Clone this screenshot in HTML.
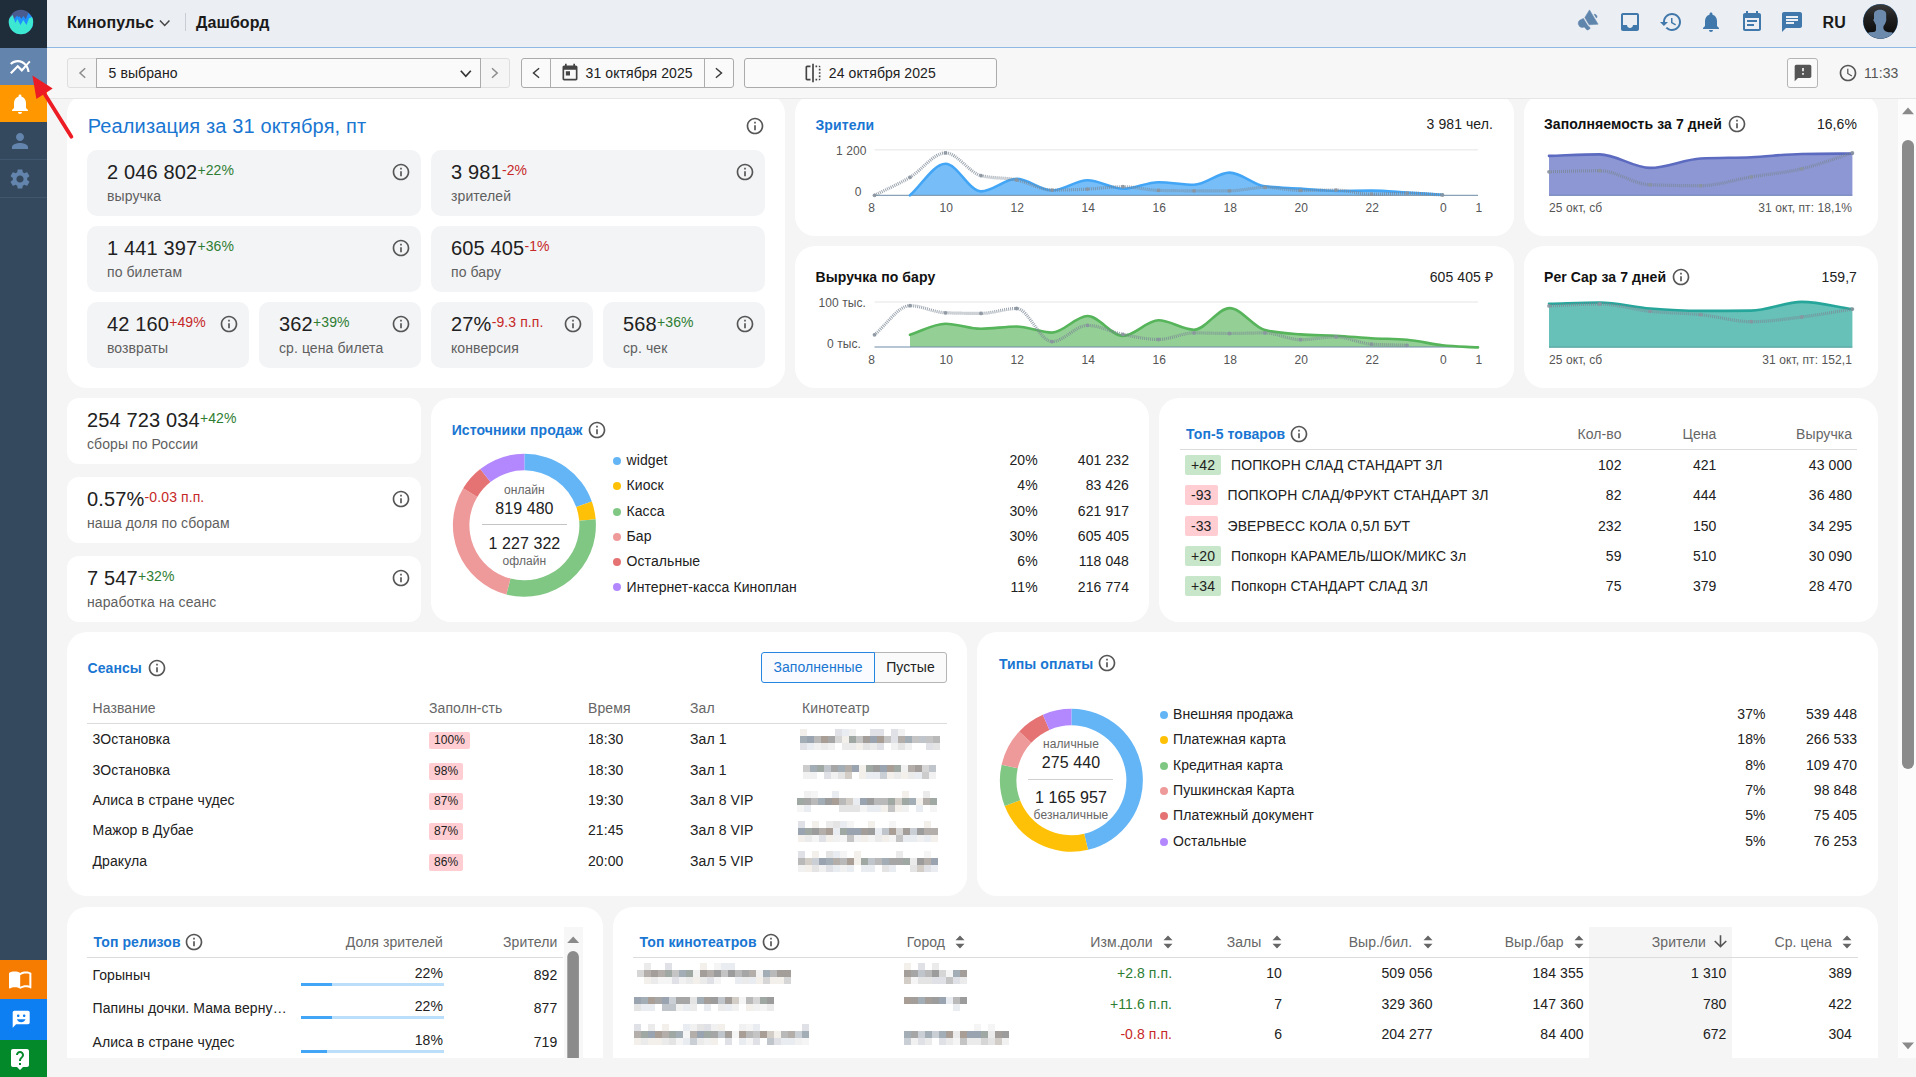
<!DOCTYPE html><html lang="ru"><head><meta charset="utf-8"><title>Дашборд</title><style>

*{box-sizing:border-box;margin:0;padding:0}
html,body{width:1916px;height:1077px;overflow:hidden;background:#f5f5f5;font-family:"Liberation Sans", Arial, sans-serif;color:#212121;letter-spacing:.085px}
.t{position:absolute;white-space:nowrap}
.i{position:absolute;display:block}
.b{position:absolute}
.card{position:absolute;background:#fff;border-radius:20px}
.tile{position:absolute;background:#f3f4f6;border-radius:10px}
#side{position:absolute;left:0;top:0;width:47px;height:1077px;background:#34495e}
#top{position:absolute;left:47px;top:0;width:1869px;height:48px;background:#ebeef3;border-bottom:1px solid #8fb9e2}
#bar{position:absolute;left:47px;top:48px;width:1869px;height:51px;background:#f7f7f7;border-bottom:1px solid #e6e6e6}
#clip{position:absolute;left:0;top:99px;width:1916px;height:959px;overflow:hidden}
#clip>.in{position:absolute;left:0;top:-99px;width:1916px;height:1200px}
svg.c{position:absolute;left:0;top:0;overflow:visible}
.blur{position:absolute;filter:blur(2.2px);opacity:.8}

</style></head><body>
<div id="clip"><div class="in">
<div class="card" style="left:67px;top:94px;width:718px;height:294px"></div>
<div class="t" style="left:87.7px;top:113.7px;font-size:20px;line-height:24px;color:#1976d2;letter-spacing:.13px;">Реализация за 31 октября, пт</div>
<svg class="i" style="left:745.3px;top:116.3px;width:20px;height:20px;fill:#565656" viewBox="0 0 24 24"><path d="M11 7h2v2h-2zm0 4h2v6h-2zm1-9C6.48 2 2 6.48 2 12s4.48 10 10 10 10-4.48 10-10S17.52 2 12 2zm0 18c-4.41 0-8-3.59-8-8s3.59-8 8-8 8 3.59 8 8-3.59 8-8 8z"/></svg>
<div class="tile" style="left:87px;top:150px;width:334px;height:66px"></div>
<div class="t" style="left:107px;top:159.6px;font-size:20px;line-height:24px;letter-spacing:.14px">2 046 802<span style="letter-spacing:.1px;font-size:14px;color:#2e7d32;position:relative;top:-3.6px;margin-left:.2px">+22%</span></div>
<div class="t" style="left:107px;top:187.2px;font-size:14px;line-height:18px;color:#5f5f5f;">выручка</div>
<svg class="i" style="left:391px;top:162.4px;width:20px;height:20px;fill:#565656" viewBox="0 0 24 24"><path d="M11 7h2v2h-2zm0 4h2v6h-2zm1-9C6.48 2 2 6.48 2 12s4.48 10 10 10 10-4.48 10-10S17.52 2 12 2zm0 18c-4.41 0-8-3.59-8-8s3.59-8 8-8 8 3.59 8 8-3.59 8-8 8z"/></svg>
<div class="tile" style="left:431px;top:150px;width:334px;height:66px"></div>
<div class="t" style="left:451px;top:159.6px;font-size:20px;line-height:24px;letter-spacing:.14px">3 981<span style="letter-spacing:.1px;font-size:14px;color:#c62828;position:relative;top:-3.6px;margin-left:.2px">-2%</span></div>
<div class="t" style="left:451px;top:187.2px;font-size:14px;line-height:18px;color:#5f5f5f;">зрителей</div>
<svg class="i" style="left:735px;top:162.4px;width:20px;height:20px;fill:#565656" viewBox="0 0 24 24"><path d="M11 7h2v2h-2zm0 4h2v6h-2zm1-9C6.48 2 2 6.48 2 12s4.48 10 10 10 10-4.48 10-10S17.52 2 12 2zm0 18c-4.41 0-8-3.59-8-8s3.59-8 8-8 8 3.59 8 8-3.59 8-8 8z"/></svg>
<div class="tile" style="left:87px;top:226px;width:334px;height:66px"></div>
<div class="t" style="left:107px;top:235.6px;font-size:20px;line-height:24px;letter-spacing:.14px">1 441 397<span style="letter-spacing:.1px;font-size:14px;color:#2e7d32;position:relative;top:-3.6px;margin-left:.2px">+36%</span></div>
<div class="t" style="left:107px;top:263.2px;font-size:14px;line-height:18px;color:#5f5f5f;">по билетам</div>
<svg class="i" style="left:391px;top:238.4px;width:20px;height:20px;fill:#565656" viewBox="0 0 24 24"><path d="M11 7h2v2h-2zm0 4h2v6h-2zm1-9C6.48 2 2 6.48 2 12s4.48 10 10 10 10-4.48 10-10S17.52 2 12 2zm0 18c-4.41 0-8-3.59-8-8s3.59-8 8-8 8 3.59 8 8-3.59 8-8 8z"/></svg>
<div class="tile" style="left:431px;top:226px;width:334px;height:66px"></div>
<div class="t" style="left:451px;top:235.6px;font-size:20px;line-height:24px;letter-spacing:.14px">605 405<span style="letter-spacing:.1px;font-size:14px;color:#c62828;position:relative;top:-3.6px;margin-left:.2px">-1%</span></div>
<div class="t" style="left:451px;top:263.2px;font-size:14px;line-height:18px;color:#5f5f5f;">по бару</div>
<div class="tile" style="left:87px;top:302px;width:162px;height:66px"></div>
<div class="t" style="left:107px;top:311.6px;font-size:20px;line-height:24px;letter-spacing:.14px">42 160<span style="letter-spacing:.1px;font-size:14px;color:#c62828;position:relative;top:-3.6px;margin-left:.2px">+49%</span></div>
<div class="t" style="left:107px;top:339.2px;font-size:14px;line-height:18px;color:#5f5f5f;">возвраты</div>
<svg class="i" style="left:219px;top:314.4px;width:20px;height:20px;fill:#565656" viewBox="0 0 24 24"><path d="M11 7h2v2h-2zm0 4h2v6h-2zm1-9C6.48 2 2 6.48 2 12s4.48 10 10 10 10-4.48 10-10S17.52 2 12 2zm0 18c-4.41 0-8-3.59-8-8s3.59-8 8-8 8 3.59 8 8-3.59 8-8 8z"/></svg>
<div class="tile" style="left:259px;top:302px;width:162px;height:66px"></div>
<div class="t" style="left:279px;top:311.6px;font-size:20px;line-height:24px;letter-spacing:.14px">362<span style="letter-spacing:.1px;font-size:14px;color:#2e7d32;position:relative;top:-3.6px;margin-left:.2px">+39%</span></div>
<div class="t" style="left:279px;top:339.2px;font-size:14px;line-height:18px;color:#5f5f5f;">ср. цена билета</div>
<svg class="i" style="left:391px;top:314.4px;width:20px;height:20px;fill:#565656" viewBox="0 0 24 24"><path d="M11 7h2v2h-2zm0 4h2v6h-2zm1-9C6.48 2 2 6.48 2 12s4.48 10 10 10 10-4.48 10-10S17.52 2 12 2zm0 18c-4.41 0-8-3.59-8-8s3.59-8 8-8 8 3.59 8 8-3.59 8-8 8z"/></svg>
<div class="tile" style="left:431px;top:302px;width:162px;height:66px"></div>
<div class="t" style="left:451px;top:311.6px;font-size:20px;line-height:24px;letter-spacing:.14px">27%<span style="letter-spacing:.1px;font-size:14px;color:#c62828;position:relative;top:-3.6px;margin-left:.2px">-9.3 п.п.</span></div>
<div class="t" style="left:451px;top:339.2px;font-size:14px;line-height:18px;color:#5f5f5f;">конверсия</div>
<svg class="i" style="left:563px;top:314.4px;width:20px;height:20px;fill:#565656" viewBox="0 0 24 24"><path d="M11 7h2v2h-2zm0 4h2v6h-2zm1-9C6.48 2 2 6.48 2 12s4.48 10 10 10 10-4.48 10-10S17.52 2 12 2zm0 18c-4.41 0-8-3.59-8-8s3.59-8 8-8 8 3.59 8 8-3.59 8-8 8z"/></svg>
<div class="tile" style="left:603px;top:302px;width:162px;height:66px"></div>
<div class="t" style="left:623px;top:311.6px;font-size:20px;line-height:24px;letter-spacing:.14px">568<span style="letter-spacing:.1px;font-size:14px;color:#2e7d32;position:relative;top:-3.6px;margin-left:.2px">+36%</span></div>
<div class="t" style="left:623px;top:339.2px;font-size:14px;line-height:18px;color:#5f5f5f;">ср. чек</div>
<svg class="i" style="left:735px;top:314.4px;width:20px;height:20px;fill:#565656" viewBox="0 0 24 24"><path d="M11 7h2v2h-2zm0 4h2v6h-2zm1-9C6.48 2 2 6.48 2 12s4.48 10 10 10 10-4.48 10-10S17.52 2 12 2zm0 18c-4.41 0-8-3.59-8-8s3.59-8 8-8 8 3.59 8 8-3.59 8-8 8z"/></svg>
<svg class="c" width="1916" height="1200">
</svg>
<div class="card" style="left:795px;top:94px;width:719px;height:142px"></div>
<div class="card" style="left:1524px;top:94px;width:354px;height:142px"></div>
<div class="card" style="left:795px;top:246px;width:719px;height:142px"></div>
<div class="card" style="left:1524px;top:246px;width:354px;height:142px"></div>
<svg class="c" width="1916" height="1200">
<line x1="874.5" y1="149.7" x2="1478" y2="149.7" stroke="#eeeeee" stroke-width="1.5"/><path d="M910.0,195.3C921.8,184.8 933.7,163.8 945.5,163.8C957.3,163.8 969.2,191.4 981.0,191.4C992.8,191.4 1004.7,178.8 1016.5,178.8C1028.3,178.8 1040.2,190.4 1052.0,190.4C1063.8,190.4 1075.7,180.3 1087.5,180.3C1099.3,180.3 1111.2,188.8 1123.0,188.8C1134.8,188.8 1146.7,182.2 1158.5,182.2C1170.3,182.2 1182.2,184.8 1194.0,184.8C1205.8,184.8 1217.7,172.6 1229.5,172.6C1241.3,172.6 1253.2,184.8 1265.0,186.3C1276.8,187.8 1288.7,187.8 1300.5,188.6C1312.3,189.4 1324.2,191.0 1336.0,191.0C1347.8,191.0 1359.7,190.6 1371.5,190.6C1383.3,190.6 1395.2,191.8 1407.0,192.5C1418.8,193.2 1430.7,194.0 1442.5,194.8L1442.5,195.3L910.0,195.3Z" fill="rgba(66,165,245,.72)"/><line x1="874.5" y1="195.3" x2="1478" y2="195.3" stroke="#6c8ba6" stroke-width="1"/><path d="M910.0,195.3C921.8,184.8 933.7,163.8 945.5,163.8C957.3,163.8 969.2,191.4 981.0,191.4C992.8,191.4 1004.7,178.8 1016.5,178.8C1028.3,178.8 1040.2,190.4 1052.0,190.4C1063.8,190.4 1075.7,180.3 1087.5,180.3C1099.3,180.3 1111.2,188.8 1123.0,188.8C1134.8,188.8 1146.7,182.2 1158.5,182.2C1170.3,182.2 1182.2,184.8 1194.0,184.8C1205.8,184.8 1217.7,172.6 1229.5,172.6C1241.3,172.6 1253.2,184.8 1265.0,186.3C1276.8,187.8 1288.7,187.8 1300.5,188.6C1312.3,189.4 1324.2,191.0 1336.0,191.0C1347.8,191.0 1359.7,190.6 1371.5,190.6C1383.3,190.6 1395.2,191.8 1407.0,192.5C1418.8,193.2 1430.7,194.0 1442.5,194.8" fill="none" stroke="#42a5f5" stroke-width="2.6" stroke-linejoin="round" stroke-linecap="round"/><path d="M874.5,195.3C886.3,189.3 898.2,184.4 910.0,177.3C921.8,170.2 933.7,152.9 945.5,152.9C957.3,152.9 969.2,172.7 981.0,175.6C992.8,178.5 1004.7,177.5 1016.5,179.9C1028.3,182.3 1040.2,190.1 1052.0,190.1C1063.8,190.1 1075.7,189.7 1087.5,189.1C1099.3,188.5 1111.2,186.7 1123.0,186.7C1134.8,186.7 1146.7,190.1 1158.5,190.4C1170.3,190.7 1182.2,190.8 1194.0,190.8C1205.8,190.8 1217.7,190.8 1229.5,190.8C1241.3,190.8 1253.2,187.4 1265.0,187.4C1276.8,187.4 1288.7,190.4 1300.5,190.4C1312.3,190.4 1324.2,190.1 1336.0,190.1C1347.8,190.1 1359.7,194.2 1371.5,194.2C1383.3,194.2 1395.2,193.1 1407.0,193.1C1418.8,193.1 1430.7,194.4 1442.5,195.0" fill="none" stroke="#7b8794" stroke-opacity=".75" stroke-width="3.2" stroke-dasharray="1 1"/><circle cx="874.5" cy="195.3" r="1.9" fill="#8a949e" fill-opacity=".9"/><circle cx="910.0" cy="177.3" r="1.9" fill="#8a949e" fill-opacity=".9"/><circle cx="945.5" cy="152.9" r="1.9" fill="#8a949e" fill-opacity=".9"/><circle cx="981.0" cy="175.6" r="1.9" fill="#8a949e" fill-opacity=".9"/><circle cx="1016.5" cy="179.9" r="1.9" fill="#8a949e" fill-opacity=".9"/><circle cx="1052.0" cy="190.1" r="1.9" fill="#8a949e" fill-opacity=".9"/><circle cx="1087.5" cy="189.1" r="1.9" fill="#8a949e" fill-opacity=".9"/><circle cx="1123.0" cy="186.7" r="1.9" fill="#8a949e" fill-opacity=".9"/><circle cx="1158.5" cy="190.4" r="1.9" fill="#8a949e" fill-opacity=".9"/><circle cx="1194.0" cy="190.8" r="1.9" fill="#8a949e" fill-opacity=".9"/><circle cx="1229.5" cy="190.8" r="1.9" fill="#8a949e" fill-opacity=".9"/><circle cx="1265.0" cy="187.4" r="1.9" fill="#8a949e" fill-opacity=".9"/><circle cx="1300.5" cy="190.4" r="1.9" fill="#8a949e" fill-opacity=".9"/><circle cx="1336.0" cy="190.1" r="1.9" fill="#8a949e" fill-opacity=".9"/><circle cx="1371.5" cy="194.2" r="1.9" fill="#8a949e" fill-opacity=".9"/><circle cx="1407.0" cy="193.1" r="1.9" fill="#8a949e" fill-opacity=".9"/><circle cx="1442.5" cy="195.0" r="1.9" fill="#8a949e" fill-opacity=".9"/>
<line x1="874.5" y1="302.1" x2="1478" y2="302.1" stroke="#eeeeee" stroke-width="1.5"/><path d="M910.0,334.8C921.8,331.1 933.7,323.7 945.5,323.7C957.3,323.7 969.2,328.8 981.0,328.8C992.8,328.8 1004.7,326.5 1016.5,326.5C1028.3,326.5 1040.2,332.6 1052.0,332.6C1063.8,332.6 1075.7,316.0 1087.5,316.0C1099.3,316.0 1111.2,335.9 1123.0,335.9C1134.8,335.9 1146.7,320.3 1158.5,320.3C1170.3,320.3 1182.2,329.7 1194.0,329.7C1205.8,329.7 1217.7,308.1 1229.5,308.1C1241.3,308.1 1253.2,327.2 1265.0,330.1C1276.8,333.0 1288.7,333.5 1300.5,334.4C1312.3,335.3 1324.2,335.1 1336.0,335.7C1347.8,336.3 1359.7,337.5 1371.5,338.2C1383.3,338.9 1395.2,338.7 1407.0,339.7C1418.8,340.7 1430.7,344.0 1442.5,345.3C1454.3,346.6 1466.2,346.7 1478.0,347.4L1478.0,347.0L910.0,347.0Z" fill="rgba(76,175,80,.6)"/><line x1="874.5" y1="347" x2="1478" y2="347" stroke="#6c8ba6" stroke-width="1"/><path d="M910.0,334.8C921.8,331.1 933.7,323.7 945.5,323.7C957.3,323.7 969.2,328.8 981.0,328.8C992.8,328.8 1004.7,326.5 1016.5,326.5C1028.3,326.5 1040.2,332.6 1052.0,332.6C1063.8,332.6 1075.7,316.0 1087.5,316.0C1099.3,316.0 1111.2,335.9 1123.0,335.9C1134.8,335.9 1146.7,320.3 1158.5,320.3C1170.3,320.3 1182.2,329.7 1194.0,329.7C1205.8,329.7 1217.7,308.1 1229.5,308.1C1241.3,308.1 1253.2,327.2 1265.0,330.1C1276.8,333.0 1288.7,333.5 1300.5,334.4C1312.3,335.3 1324.2,335.1 1336.0,335.7C1347.8,336.3 1359.7,337.5 1371.5,338.2C1383.3,338.9 1395.2,338.7 1407.0,339.7C1418.8,340.7 1430.7,344.0 1442.5,345.3C1454.3,346.6 1466.2,346.7 1478.0,347.4" fill="none" stroke="#56b45a" stroke-width="2.6" stroke-linejoin="round" stroke-linecap="round"/><path d="M874.5,334.8C886.3,325.1 898.2,305.7 910.0,305.7C921.8,305.7 933.7,312.4 945.5,312.8C957.3,313.2 969.2,313.4 981.0,313.4C992.8,313.4 1004.7,308.5 1016.5,308.5C1028.3,308.5 1040.2,341.6 1052.0,341.6C1063.8,341.6 1075.7,325.4 1087.5,325.4C1099.3,325.4 1111.2,332.0 1123.0,334.4C1134.8,336.8 1146.7,339.5 1158.5,339.5C1170.3,339.5 1182.2,332.9 1194.0,332.9C1205.8,332.9 1217.7,333.5 1229.5,333.5C1241.3,333.5 1253.2,332.9 1265.0,332.9C1276.8,332.9 1288.7,339.7 1300.5,339.7C1312.3,339.7 1324.2,336.9 1336.0,336.9C1347.8,336.9 1359.7,343.5 1371.5,344.2C1383.3,344.9 1395.2,344.9 1407.0,345.3" fill="none" stroke="#7b8794" stroke-opacity=".75" stroke-width="3.2" stroke-dasharray="1 1"/><circle cx="874.5" cy="334.8" r="1.9" fill="#8a949e" fill-opacity=".9"/><circle cx="910.0" cy="305.7" r="1.9" fill="#8a949e" fill-opacity=".9"/><circle cx="945.5" cy="312.8" r="1.9" fill="#8a949e" fill-opacity=".9"/><circle cx="981.0" cy="313.4" r="1.9" fill="#8a949e" fill-opacity=".9"/><circle cx="1016.5" cy="308.5" r="1.9" fill="#8a949e" fill-opacity=".9"/><circle cx="1052.0" cy="341.6" r="1.9" fill="#8a949e" fill-opacity=".9"/><circle cx="1087.5" cy="325.4" r="1.9" fill="#8a949e" fill-opacity=".9"/><circle cx="1123.0" cy="334.4" r="1.9" fill="#8a949e" fill-opacity=".9"/><circle cx="1158.5" cy="339.5" r="1.9" fill="#8a949e" fill-opacity=".9"/><circle cx="1194.0" cy="332.9" r="1.9" fill="#8a949e" fill-opacity=".9"/><circle cx="1229.5" cy="333.5" r="1.9" fill="#8a949e" fill-opacity=".9"/><circle cx="1265.0" cy="332.9" r="1.9" fill="#8a949e" fill-opacity=".9"/><circle cx="1300.5" cy="339.7" r="1.9" fill="#8a949e" fill-opacity=".9"/><circle cx="1336.0" cy="336.9" r="1.9" fill="#8a949e" fill-opacity=".9"/><circle cx="1371.5" cy="344.2" r="1.9" fill="#8a949e" fill-opacity=".9"/><circle cx="1407.0" cy="345.3" r="1.9" fill="#8a949e" fill-opacity=".9"/>
<path d="M1549.0,155.9C1565.9,155.4 1582.7,154.4 1599.6,154.4C1616.4,154.4 1633.3,167.9 1650.1,167.9C1667.0,167.9 1683.8,159.4 1700.7,158.5C1717.6,157.6 1734.4,157.9 1751.3,157.2C1768.1,156.4 1785.0,154.3 1801.8,154.0C1818.7,153.7 1835.5,153.7 1852.4,153.6L1852.4,195.3L1549.0,195.3Z" fill="rgba(92,107,192,.7)"/><path d="M1549.0,155.9C1565.9,155.4 1582.7,154.4 1599.6,154.4C1616.4,154.4 1633.3,167.9 1650.1,167.9C1667.0,167.9 1683.8,159.4 1700.7,158.5C1717.6,157.6 1734.4,157.9 1751.3,157.2C1768.1,156.4 1785.0,154.3 1801.8,154.0C1818.7,153.7 1835.5,153.7 1852.4,153.6" fill="none" stroke="#5c6bc0" stroke-width="2.6" stroke-linejoin="round" stroke-linecap="round"/><path d="M1549.0,171.8C1565.9,171.4 1582.7,170.7 1599.6,170.7C1616.4,170.7 1633.3,184.2 1650.1,184.8C1667.0,185.4 1683.8,185.7 1700.7,185.7C1717.6,185.7 1734.4,179.7 1751.3,176.9C1768.1,174.1 1785.0,172.8 1801.8,168.8C1818.7,164.8 1835.5,158.2 1852.4,152.9" fill="none" stroke="#7b8794" stroke-opacity=".75" stroke-width="3.2" stroke-dasharray="1 1"/><circle cx="1549.0" cy="171.8" r="1.9" fill="#8a949e" fill-opacity=".9"/><circle cx="1599.6" cy="170.7" r="1.9" fill="#8a949e" fill-opacity=".9"/><circle cx="1650.1" cy="184.8" r="1.9" fill="#8a949e" fill-opacity=".9"/><circle cx="1700.7" cy="185.7" r="1.9" fill="#8a949e" fill-opacity=".9"/><circle cx="1751.3" cy="176.9" r="1.9" fill="#8a949e" fill-opacity=".9"/><circle cx="1801.8" cy="168.8" r="1.9" fill="#8a949e" fill-opacity=".9"/><circle cx="1852.4" cy="152.9" r="1.9" fill="#8a949e" fill-opacity=".9"/>
<line x1="1549" y1="195.3" x2="1852.4" y2="195.3" stroke="#6c7fb5" stroke-width="1"/>
<path d="M1549.0,303.8C1565.9,303.4 1582.7,302.5 1599.6,302.5C1616.4,302.5 1633.3,307.1 1650.1,308.5C1667.0,309.9 1683.8,310.9 1700.7,310.9C1717.6,310.9 1734.4,310.8 1751.3,310.6C1768.1,310.4 1785.0,301.9 1801.8,301.9C1818.7,301.9 1835.5,306.7 1852.4,309.1L1852.4,347.2L1549.0,347.2Z" fill="rgba(38,166,154,.7)"/><path d="M1549.0,303.8C1565.9,303.4 1582.7,302.5 1599.6,302.5C1616.4,302.5 1633.3,307.1 1650.1,308.5C1667.0,309.9 1683.8,310.9 1700.7,310.9C1717.6,310.9 1734.4,310.8 1751.3,310.6C1768.1,310.4 1785.0,301.9 1801.8,301.9C1818.7,301.9 1835.5,306.7 1852.4,309.1" fill="none" stroke="#26a69a" stroke-width="2.6" stroke-linejoin="round" stroke-linecap="round"/><path d="M1549.0,305.9C1565.9,305.3 1582.7,304.0 1599.6,304.0C1616.4,304.0 1633.3,309.5 1650.1,311.3C1667.0,313.1 1683.8,313.0 1700.7,314.7C1717.6,316.4 1734.4,321.7 1751.3,321.7C1768.1,321.7 1785.0,319.1 1801.8,317.0C1818.7,314.9 1835.5,311.7 1852.4,309.1" fill="none" stroke="#7b8794" stroke-opacity=".75" stroke-width="3.2" stroke-dasharray="1 1"/><circle cx="1549.0" cy="305.9" r="1.9" fill="#8a949e" fill-opacity=".9"/><circle cx="1599.6" cy="304.0" r="1.9" fill="#8a949e" fill-opacity=".9"/><circle cx="1650.1" cy="311.3" r="1.9" fill="#8a949e" fill-opacity=".9"/><circle cx="1700.7" cy="314.7" r="1.9" fill="#8a949e" fill-opacity=".9"/><circle cx="1751.3" cy="321.7" r="1.9" fill="#8a949e" fill-opacity=".9"/><circle cx="1801.8" cy="317.0" r="1.9" fill="#8a949e" fill-opacity=".9"/><circle cx="1852.4" cy="309.1" r="1.9" fill="#8a949e" fill-opacity=".9"/>
<line x1="1549" y1="347.2" x2="1852.4" y2="347.2" stroke="#4f9c98" stroke-width="1"/>
</svg>
<div class="t" style="left:815.5px;top:116.2px;font-size:14px;line-height:18px;color:#1976d2;font-weight:bold;">Зрители</div>
<div class="t" style="right:423px;top:114.7px;font-size:14px;line-height:18px;color:#212121;">3 981 чел.</div>
<div class="t" style="right:1049.5px;top:142.6px;font-size:12px;line-height:16px;color:#555;">1 200</div>
<div class="t" style="right:1054.5px;top:183.6px;font-size:12px;line-height:16px;color:#555;">0</div>
<div class="t" style="left:721.7px;width:300px;text-align:center;top:200px;font-size:12px;line-height:16px;color:#555;">8</div>
<div class="t" style="left:721.7px;width:300px;text-align:center;top:351.9px;font-size:12px;line-height:16px;color:#555;">8</div>
<div class="t" style="left:796.3px;width:300px;text-align:center;top:200px;font-size:12px;line-height:16px;color:#555;">10</div>
<div class="t" style="left:796.3px;width:300px;text-align:center;top:351.9px;font-size:12px;line-height:16px;color:#555;">10</div>
<div class="t" style="left:867.3px;width:300px;text-align:center;top:200px;font-size:12px;line-height:16px;color:#555;">12</div>
<div class="t" style="left:867.3px;width:300px;text-align:center;top:351.9px;font-size:12px;line-height:16px;color:#555;">12</div>
<div class="t" style="left:938.3px;width:300px;text-align:center;top:200px;font-size:12px;line-height:16px;color:#555;">14</div>
<div class="t" style="left:938.3px;width:300px;text-align:center;top:351.9px;font-size:12px;line-height:16px;color:#555;">14</div>
<div class="t" style="left:1009.3px;width:300px;text-align:center;top:200px;font-size:12px;line-height:16px;color:#555;">16</div>
<div class="t" style="left:1009.3px;width:300px;text-align:center;top:351.9px;font-size:12px;line-height:16px;color:#555;">16</div>
<div class="t" style="left:1080.3px;width:300px;text-align:center;top:200px;font-size:12px;line-height:16px;color:#555;">18</div>
<div class="t" style="left:1080.3px;width:300px;text-align:center;top:351.9px;font-size:12px;line-height:16px;color:#555;">18</div>
<div class="t" style="left:1151.3px;width:300px;text-align:center;top:200px;font-size:12px;line-height:16px;color:#555;">20</div>
<div class="t" style="left:1151.3px;width:300px;text-align:center;top:351.9px;font-size:12px;line-height:16px;color:#555;">20</div>
<div class="t" style="left:1222.3px;width:300px;text-align:center;top:200px;font-size:12px;line-height:16px;color:#555;">22</div>
<div class="t" style="left:1222.3px;width:300px;text-align:center;top:351.9px;font-size:12px;line-height:16px;color:#555;">22</div>
<div class="t" style="left:1293.3px;width:300px;text-align:center;top:200px;font-size:12px;line-height:16px;color:#555;">0</div>
<div class="t" style="left:1293.3px;width:300px;text-align:center;top:351.9px;font-size:12px;line-height:16px;color:#555;">0</div>
<div class="t" style="left:1328.8px;width:300px;text-align:center;top:200px;font-size:12px;line-height:16px;color:#555;">1</div>
<div class="t" style="left:1328.8px;width:300px;text-align:center;top:351.9px;font-size:12px;line-height:16px;color:#555;">1</div>
<div class="t" style="left:815.5px;top:268px;font-size:14px;line-height:18px;color:#111;font-weight:bold;">Выручка по бару</div>
<div class="t" style="right:423px;top:267.8px;font-size:14px;line-height:18px;color:#212121;">605 405 ₽</div>
<div class="t" style="right:1050px;top:295.2px;font-size:12px;line-height:16px;color:#555;">100 тыс.</div>
<div class="t" style="right:1055px;top:336px;font-size:12px;line-height:16px;color:#555;">0 тыс.</div>
<div class="t" style="left:1544px;top:114.9px;font-size:14px;line-height:18px;color:#111;font-weight:bold;">Заполняемость за 7 дней</div>
<svg class="i" style="left:1727px;top:114.3px;width:20px;height:20px;fill:#565656" viewBox="0 0 24 24"><path d="M11 7h2v2h-2zm0 4h2v6h-2zm1-9C6.48 2 2 6.48 2 12s4.48 10 10 10 10-4.48 10-10S17.52 2 12 2zm0 18c-4.41 0-8-3.59-8-8s3.59-8 8-8 8 3.59 8 8-3.59 8-8 8z"/></svg>
<div class="t" style="right:59px;top:114.7px;font-size:14px;line-height:18px;color:#212121;">16,6%</div>
<div class="t" style="left:1549px;top:200px;font-size:12px;line-height:16px;color:#555;">25 окт, сб</div>
<div class="t" style="right:64px;top:200px;font-size:12px;line-height:16px;color:#555;">31 окт, пт: 18,1%</div>
<div class="t" style="left:1544px;top:268px;font-size:14px;line-height:18px;color:#111;font-weight:bold;">Per Cap за 7 дней</div>
<svg class="i" style="left:1671px;top:267.3px;width:20px;height:20px;fill:#565656" viewBox="0 0 24 24"><path d="M11 7h2v2h-2zm0 4h2v6h-2zm1-9C6.48 2 2 6.48 2 12s4.48 10 10 10 10-4.48 10-10S17.52 2 12 2zm0 18c-4.41 0-8-3.59-8-8s3.59-8 8-8 8 3.59 8 8-3.59 8-8 8z"/></svg>
<div class="t" style="right:59px;top:267.8px;font-size:14px;line-height:18px;color:#212121;">159,7</div>
<div class="t" style="left:1549px;top:351.9px;font-size:12px;line-height:16px;color:#555;">25 окт, сб</div>
<div class="t" style="right:64px;top:351.9px;font-size:12px;line-height:16px;color:#555;">31 окт, пт: 152,1</div>
<div class="card" style="left:67px;top:398px;width:354px;height:66px;border-radius:12px"></div>
<div class="t" style="left:87px;top:407.6px;font-size:20px;line-height:24px;letter-spacing:.14px">254 723 034<span style="letter-spacing:.1px;font-size:14px;color:#2e7d32;position:relative;top:-3.6px;margin-left:.2px">+42%</span></div>
<div class="t" style="left:87px;top:435.2px;font-size:14px;line-height:18px;color:#5f5f5f;">сборы по России</div>
<div class="card" style="left:67px;top:477px;width:354px;height:66px;border-radius:12px"></div>
<div class="t" style="left:87px;top:486.6px;font-size:20px;line-height:24px;letter-spacing:.14px">0.57%<span style="letter-spacing:.1px;font-size:14px;color:#c62828;position:relative;top:-3.6px;margin-left:.2px">-0.03 п.п.</span></div>
<div class="t" style="left:87px;top:514.2px;font-size:14px;line-height:18px;color:#5f5f5f;">наша доля по сборам</div>
<svg class="i" style="left:391px;top:489.4px;width:20px;height:20px;fill:#565656" viewBox="0 0 24 24"><path d="M11 7h2v2h-2zm0 4h2v6h-2zm1-9C6.48 2 2 6.48 2 12s4.48 10 10 10 10-4.48 10-10S17.52 2 12 2zm0 18c-4.41 0-8-3.59-8-8s3.59-8 8-8 8 3.59 8 8-3.59 8-8 8z"/></svg>
<div class="card" style="left:67px;top:556px;width:354px;height:66px;border-radius:12px"></div>
<div class="t" style="left:87px;top:565.6px;font-size:20px;line-height:24px;letter-spacing:.14px">7 547<span style="letter-spacing:.1px;font-size:14px;color:#2e7d32;position:relative;top:-3.6px;margin-left:.2px">+32%</span></div>
<div class="t" style="left:87px;top:593.2px;font-size:14px;line-height:18px;color:#5f5f5f;">наработка на сеанс</div>
<svg class="i" style="left:391px;top:568.4px;width:20px;height:20px;fill:#565656" viewBox="0 0 24 24"><path d="M11 7h2v2h-2zm0 4h2v6h-2zm1-9C6.48 2 2 6.48 2 12s4.48 10 10 10 10-4.48 10-10S17.52 2 12 2zm0 18c-4.41 0-8-3.59-8-8s3.59-8 8-8 8 3.59 8 8-3.59 8-8 8z"/></svg>
<div class="card" style="left:431px;top:398px;width:718px;height:224px"></div>
<div class="t" style="left:451.7px;top:421.3px;font-size:14px;line-height:18px;color:#1976d2;font-weight:bold;">Источники продаж</div>
<svg class="i" style="left:587px;top:419.8px;width:20px;height:20px;fill:#565656" viewBox="0 0 24 24"><path d="M11 7h2v2h-2zm0 4h2v6h-2zm1-9C6.48 2 2 6.48 2 12s4.48 10 10 10 10-4.48 10-10S17.52 2 12 2zm0 18c-4.41 0-8-3.59-8-8s3.59-8 8-8 8 3.59 8 8-3.59 8-8 8z"/></svg>
<svg class="c" width="1916" height="1200">
<path d="M524.40,453.80A71.5,71.5 0 0 1 591.83,501.52L576.27,507.00A55,55 0 0 0 524.40,470.30Z" fill="#64b5f6"/><path d="M591.83,501.52A71.5,71.5 0 0 1 595.65,519.37L579.21,520.74A55,55 0 0 0 576.27,507.00Z" fill="#ffc107"/><path d="M595.65,519.37A71.5,71.5 0 0 1 506.34,594.48L510.51,578.52A55,55 0 0 0 579.21,520.74Z" fill="#81c784"/><path d="M506.34,594.48A71.5,71.5 0 0 1 463.18,488.36L477.31,496.88A55,55 0 0 0 510.51,578.52Z" fill="#ef9a9a"/><path d="M463.18,488.36A71.5,71.5 0 0 1 480.26,469.06L490.44,482.03A55,55 0 0 0 477.31,496.88Z" fill="#e57373"/><path d="M480.26,469.06A71.5,71.5 0 0 1 524.40,453.80L524.40,470.30A55,55 0 0 0 490.44,482.03Z" fill="#b388ff"/>
<line x1="482" y1="524.5" x2="567" y2="524.5" stroke="#c4c4c4" stroke-width="1"/>
</svg>
<div class="t" style="left:374.4px;width:300px;text-align:center;top:482px;font-size:12px;line-height:16px;color:#666;">онлайн</div>
<div class="t" style="left:374.4px;width:300px;text-align:center;top:497.7px;font-size:16px;line-height:21px;color:#212121;">819 480</div>
<div class="t" style="left:374.4px;width:300px;text-align:center;top:532.7px;font-size:16px;line-height:21px;color:#212121;">1 227 322</div>
<div class="t" style="left:374.4px;width:300px;text-align:center;top:552.5px;font-size:12px;line-height:16px;color:#666;">офлайн</div>
<div class="b" style="left:612.8px;top:456.7px;width:8px;height:8px;background:#64b5f6;border-radius:50%"></div>
<div class="t" style="left:626.5px;top:451.2px;font-size:14px;line-height:18px;color:#212121;">widget</div>
<div class="t" style="right:878.3px;top:451.2px;font-size:14px;line-height:18px;color:#212121;">20%</div>
<div class="t" style="right:787px;top:451.2px;font-size:14px;line-height:18px;color:#212121;">401 232</div>
<div class="b" style="left:612.8px;top:481.8px;width:8px;height:8px;background:#ffc107;border-radius:50%"></div>
<div class="t" style="left:626.5px;top:476.3px;font-size:14px;line-height:18px;color:#212121;">Киоск</div>
<div class="t" style="right:878.3px;top:476.3px;font-size:14px;line-height:18px;color:#212121;">4%</div>
<div class="t" style="right:787px;top:476.3px;font-size:14px;line-height:18px;color:#212121;">83 426</div>
<div class="b" style="left:612.8px;top:507.7px;width:8px;height:8px;background:#81c784;border-radius:50%"></div>
<div class="t" style="left:626.5px;top:502.2px;font-size:14px;line-height:18px;color:#212121;">Касса</div>
<div class="t" style="right:878.3px;top:502.2px;font-size:14px;line-height:18px;color:#212121;">30%</div>
<div class="t" style="right:787px;top:502.2px;font-size:14px;line-height:18px;color:#212121;">621 917</div>
<div class="b" style="left:612.8px;top:532.7px;width:8px;height:8px;background:#ef9a9a;border-radius:50%"></div>
<div class="t" style="left:626.5px;top:527.2px;font-size:14px;line-height:18px;color:#212121;">Бар</div>
<div class="t" style="right:878.3px;top:527.2px;font-size:14px;line-height:18px;color:#212121;">30%</div>
<div class="t" style="right:787px;top:527.2px;font-size:14px;line-height:18px;color:#212121;">605 405</div>
<div class="b" style="left:612.8px;top:557.8px;width:8px;height:8px;background:#e57373;border-radius:50%"></div>
<div class="t" style="left:626.5px;top:552.3px;font-size:14px;line-height:18px;color:#212121;">Остальные</div>
<div class="t" style="right:878.3px;top:552.3px;font-size:14px;line-height:18px;color:#212121;">6%</div>
<div class="t" style="right:787px;top:552.3px;font-size:14px;line-height:18px;color:#212121;">118 048</div>
<div class="b" style="left:612.8px;top:583px;width:8px;height:8px;background:#b388ff;border-radius:50%"></div>
<div class="t" style="left:626.5px;top:577.5px;font-size:14px;line-height:18px;color:#212121;">Интернет-касса Киноплан</div>
<div class="t" style="right:878.3px;top:577.5px;font-size:14px;line-height:18px;color:#212121;">11%</div>
<div class="t" style="right:787px;top:577.5px;font-size:14px;line-height:18px;color:#212121;">216 774</div>
<div class="card" style="left:1159px;top:398px;width:719px;height:224px"></div>
<div class="t" style="left:1186px;top:425.2px;font-size:14px;line-height:18px;color:#1976d2;font-weight:bold;">Топ-5 товаров</div>
<svg class="i" style="left:1289px;top:424.3px;width:20px;height:20px;fill:#565656" viewBox="0 0 24 24"><path d="M11 7h2v2h-2zm0 4h2v6h-2zm1-9C6.48 2 2 6.48 2 12s4.48 10 10 10 10-4.48 10-10S17.52 2 12 2zm0 18c-4.41 0-8-3.59-8-8s3.59-8 8-8 8 3.59 8 8-3.59 8-8 8z"/></svg>
<div class="t" style="right:294.4px;top:425.2px;font-size:14px;line-height:18px;color:#666;">Кол-во</div>
<div class="t" style="right:199.5px;top:425.2px;font-size:14px;line-height:18px;color:#666;">Цена</div>
<div class="t" style="right:63.8px;top:425.2px;font-size:14px;line-height:18px;color:#666;">Выручка</div>
<div class="b" style="left:1180px;top:449px;width:677px;height:1px;background:#dcdcdc"></div>
<div class="t" style="left:1185px;top:454.8px;font-size:14px;line-height:20px"><span style="display:inline-block;background:#c8e6c9;border-radius:2px;padding:0 6px;margin-right:10px">+42</span>ПОПКОРН СЛАД СТАНДАРТ 3Л</div>
<div class="t" style="right:294.4px;top:455.8px;font-size:14px;line-height:18px;color:#212121;">102</div>
<div class="t" style="right:199.5px;top:455.8px;font-size:14px;line-height:18px;color:#212121;">421</div>
<div class="t" style="right:63.8px;top:455.8px;font-size:14px;line-height:18px;color:#212121;">43 000</div>
<div class="t" style="left:1185px;top:485.3px;font-size:14px;line-height:20px"><span style="display:inline-block;background:#ffcdd2;border-radius:2px;padding:0 6px;margin-right:10px">-93</span>ПОПКОРН СЛАД/ФРУКТ СТАНДАРТ 3Л</div>
<div class="t" style="right:294.4px;top:486.3px;font-size:14px;line-height:18px;color:#212121;">82</div>
<div class="t" style="right:199.5px;top:486.3px;font-size:14px;line-height:18px;color:#212121;">444</div>
<div class="t" style="right:63.8px;top:486.3px;font-size:14px;line-height:18px;color:#212121;">36 480</div>
<div class="t" style="left:1185px;top:515.8px;font-size:14px;line-height:20px"><span style="display:inline-block;background:#ffcdd2;border-radius:2px;padding:0 6px;margin-right:10px">-33</span>ЭВЕРВЕСС КОЛА 0,5Л БУТ</div>
<div class="t" style="right:294.4px;top:516.8px;font-size:14px;line-height:18px;color:#212121;">232</div>
<div class="t" style="right:199.5px;top:516.8px;font-size:14px;line-height:18px;color:#212121;">150</div>
<div class="t" style="right:63.8px;top:516.8px;font-size:14px;line-height:18px;color:#212121;">34 295</div>
<div class="t" style="left:1185px;top:546px;font-size:14px;line-height:20px"><span style="display:inline-block;background:#c8e6c9;border-radius:2px;padding:0 6px;margin-right:10px">+20</span>Попкорн КАРАМЕЛЬ/ШОК/МИКС 3л</div>
<div class="t" style="right:294.4px;top:547px;font-size:14px;line-height:18px;color:#212121;">59</div>
<div class="t" style="right:199.5px;top:547px;font-size:14px;line-height:18px;color:#212121;">510</div>
<div class="t" style="right:63.8px;top:547px;font-size:14px;line-height:18px;color:#212121;">30 090</div>
<div class="t" style="left:1185px;top:576.3px;font-size:14px;line-height:20px"><span style="display:inline-block;background:#c8e6c9;border-radius:2px;padding:0 6px;margin-right:10px">+34</span>Попкорн СТАНДАРТ СЛАД 3Л</div>
<div class="t" style="right:294.4px;top:577.3px;font-size:14px;line-height:18px;color:#212121;">75</div>
<div class="t" style="right:199.5px;top:577.3px;font-size:14px;line-height:18px;color:#212121;">379</div>
<div class="t" style="right:63.8px;top:577.3px;font-size:14px;line-height:18px;color:#212121;">28 470</div>
<div class="card" style="left:67px;top:632px;width:900px;height:264px"></div>
<div class="t" style="left:87.5px;top:659.3px;font-size:14px;line-height:18px;color:#1976d2;font-weight:bold;">Сеансы</div>
<svg class="i" style="left:147px;top:657.6px;width:20px;height:20px;fill:#565656" viewBox="0 0 24 24"><path d="M11 7h2v2h-2zm0 4h2v6h-2zm1-9C6.48 2 2 6.48 2 12s4.48 10 10 10 10-4.48 10-10S17.52 2 12 2zm0 18c-4.41 0-8-3.59-8-8s3.59-8 8-8 8 3.59 8 8-3.59 8-8 8z"/></svg>
<div class="t" style="left:761px;top:652px;width:114px;height:31px;border:1px solid #2685e0;border-radius:3px 0 0 3px;background:#f9fbfe;color:#1976d2;font-size:14px;line-height:29px;text-align:center;z-index:2">Заполненные</div>
<div class="t" style="left:874px;top:652px;width:73px;height:31px;border:1px solid #b5b5b5;border-radius:0 3px 3px 0;background:#fafafa;color:#212121;font-size:14px;line-height:29px;text-align:center">Пустые</div>
<div class="t" style="left:92.5px;top:699.2px;font-size:14px;line-height:18px;color:#666;">Название</div>
<div class="t" style="left:429px;top:699.2px;font-size:14px;line-height:18px;color:#666;">Заполн-сть</div>
<div class="t" style="left:588px;top:699.2px;font-size:14px;line-height:18px;color:#666;">Время</div>
<div class="t" style="left:690px;top:699.2px;font-size:14px;line-height:18px;color:#666;">Зал</div>
<div class="t" style="left:802px;top:699.2px;font-size:14px;line-height:18px;color:#666;">Кинотеатр</div>
<div class="b" style="left:87px;top:723px;width:860px;height:1px;background:#dcdcdc"></div>
<div class="t" style="left:92.5px;top:730.4px;font-size:14px;line-height:18px;color:#212121;">3Остановка</div>
<div class="t" style="left:429px;top:732.1px;font-size:12px;line-height:17px;background:#ffcdd2;border-radius:2px;padding:0 5px">100%</div>
<div class="t" style="left:588px;top:730.4px;font-size:14px;line-height:18px;color:#212121;">18:30</div>
<div class="t" style="left:690px;top:730.4px;font-size:14px;line-height:18px;color:#212121;">Зал 1</div>
<div class="t" style="left:92.5px;top:761px;font-size:14px;line-height:18px;color:#212121;">3Остановка</div>
<div class="t" style="left:429px;top:762.7px;font-size:12px;line-height:17px;background:#ffcdd2;border-radius:2px;padding:0 5px">98%</div>
<div class="t" style="left:588px;top:761px;font-size:14px;line-height:18px;color:#212121;">18:30</div>
<div class="t" style="left:690px;top:761px;font-size:14px;line-height:18px;color:#212121;">Зал 1</div>
<div class="t" style="left:92.5px;top:791.4px;font-size:14px;line-height:18px;color:#212121;">Алиса в стране чудес</div>
<div class="t" style="left:429px;top:793.1px;font-size:12px;line-height:17px;background:#ffcdd2;border-radius:2px;padding:0 5px">87%</div>
<div class="t" style="left:588px;top:791.4px;font-size:14px;line-height:18px;color:#212121;">19:30</div>
<div class="t" style="left:690px;top:791.4px;font-size:14px;line-height:18px;color:#212121;">Зал 8 VIP</div>
<div class="t" style="left:92.5px;top:821px;font-size:14px;line-height:18px;color:#212121;">Мажор в Дубае</div>
<div class="t" style="left:429px;top:822.7px;font-size:12px;line-height:17px;background:#ffcdd2;border-radius:2px;padding:0 5px">87%</div>
<div class="t" style="left:588px;top:821px;font-size:14px;line-height:18px;color:#212121;">21:45</div>
<div class="t" style="left:690px;top:821px;font-size:14px;line-height:18px;color:#212121;">Зал 8 VIP</div>
<div class="t" style="left:92.5px;top:852.2px;font-size:14px;line-height:18px;color:#212121;">Дракула</div>
<div class="t" style="left:429px;top:853.9px;font-size:12px;line-height:17px;background:#ffcdd2;border-radius:2px;padding:0 5px">86%</div>
<div class="t" style="left:588px;top:852.2px;font-size:14px;line-height:18px;color:#212121;">20:00</div>
<div class="t" style="left:690px;top:852.2px;font-size:14px;line-height:18px;color:#212121;">Зал 5 VIP</div>
<svg class="c" width="1916" height="1200" shape-rendering="crispEdges"><path fill="#f3efeb" d="M800,728.9h7v7h-7zM842,735.9h7v7h-7zM856,742.9h7v7h-7zM858.9,765.1h7v7h-7zM858.9,772.1h7v7h-7zM886.9,772.1h7v7h-7zM900.9,772.1h7v7h-7zM902,790.5h7v7h-7zM916,797.5h7v7h-7zM881,804.5h7v7h-7zM895,804.5h7v7h-7zM812,820.8h7v7h-7zM868,820.8h7v7h-7zM924,820.8h7v7h-7zM798,834.8h7v7h-7zM826,834.8h7v7h-7zM861,834.8h7v7h-7zM882,834.8h7v7h-7zM931,834.8h7v7h-7zM812,850.9h7v7h-7zM854,850.9h7v7h-7zM854,857.9h7v7h-7zM805,864.9h7v7h-7z"/><path fill="#dfe1e6" d="M835,728.9h7v7h-7zM870,728.9h7v7h-7zM877,728.9h7v7h-7zM891,728.9h7v7h-7zM891,735.9h7v7h-7zM800,742.9h7v7h-7zM877,742.9h7v7h-7zM926,742.9h7v7h-7zM823.9,772.1h7v7h-7zM798,820.8h7v7h-7zM819,834.8h7v7h-7zM798,850.9h7v7h-7zM826,864.9h7v7h-7zM924,864.9h7v7h-7z"/><path fill="#e9edf1" d="M842,728.9h7v7h-7zM807,742.9h7v7h-7zM865.9,772.1h7v7h-7zM872.9,772.1h7v7h-7zM914.9,772.1h7v7h-7zM832,790.5h7v7h-7zM853,797.5h7v7h-7zM804,804.5h7v7h-7zM867,804.5h7v7h-7zM874,804.5h7v7h-7zM916,804.5h7v7h-7zM840,820.8h7v7h-7zM833,827.8h7v7h-7zM875,827.8h7v7h-7zM903,834.8h7v7h-7zM910,834.8h7v7h-7zM924,834.8h7v7h-7zM833,850.9h7v7h-7zM833,864.9h7v7h-7zM847,864.9h7v7h-7zM861,864.9h7v7h-7zM868,864.9h7v7h-7zM889,864.9h7v7h-7zM931,864.9h7v7h-7z"/><path fill="#f1f1f1" d="M849,728.9h7v7h-7zM898,728.9h7v7h-7zM814,742.9h7v7h-7zM828,742.9h7v7h-7zM891,742.9h7v7h-7zM905,742.9h7v7h-7zM900.9,765.1h7v7h-7zM802.9,772.1h7v7h-7zM809.9,772.1h7v7h-7zM830.9,772.1h7v7h-7zM928.9,772.1h7v7h-7zM804,790.5h7v7h-7zM902,804.5h7v7h-7zM833,834.8h7v7h-7zM854,834.8h7v7h-7zM917,834.8h7v7h-7zM798,864.9h7v7h-7zM819,864.9h7v7h-7zM840,864.9h7v7h-7z"/><path fill="#a3adb6" d="M800,735.9h7v7h-7zM905,735.9h7v7h-7zM809.9,765.1h7v7h-7zM837.9,765.1h7v7h-7zM818,797.5h7v7h-7zM909,797.5h7v7h-7zM826,857.9h7v7h-7zM882,857.9h7v7h-7z"/><path fill="#9aa3b0" d="M807,735.9h7v7h-7zM870,735.9h7v7h-7zM851.9,765.1h7v7h-7zM879.9,765.1h7v7h-7zM860,797.5h7v7h-7zM798,827.8h7v7h-7zM847,827.8h7v7h-7zM854,827.8h7v7h-7zM819,857.9h7v7h-7zM931,857.9h7v7h-7z"/><path fill="#b9b9b9" d="M814,735.9h7v7h-7zM933,735.9h7v7h-7zM811,797.5h7v7h-7zM839,797.5h7v7h-7zM874,797.5h7v7h-7zM881,797.5h7v7h-7zM798,857.9h7v7h-7zM840,857.9h7v7h-7zM875,857.9h7v7h-7z"/><path fill="#a89e95" d="M821,735.9h7v7h-7zM877,735.9h7v7h-7zM886.9,765.1h7v7h-7zM832,797.5h7v7h-7zM826,827.8h7v7h-7zM889,827.8h7v7h-7zM847,857.9h7v7h-7z"/><path fill="#a6a6a6" d="M828,735.9h7v7h-7zM830.9,765.1h7v7h-7zM804,797.5h7v7h-7zM889,857.9h7v7h-7zM896,857.9h7v7h-7z"/><path fill="#d6d6d6" d="M835,735.9h7v7h-7zM921.9,765.1h7v7h-7zM896,827.8h7v7h-7z"/><path fill="#9fa8a2" d="M849,735.9h7v7h-7zM816.9,765.1h7v7h-7zM865.9,765.1h7v7h-7zM893.9,765.1h7v7h-7zM797,797.5h7v7h-7zM888,797.5h7v7h-7zM902,797.5h7v7h-7zM930,797.5h7v7h-7zM805,827.8h7v7h-7zM840,827.8h7v7h-7zM861,857.9h7v7h-7zM903,857.9h7v7h-7z"/><path fill="#c4c4c4" d="M856,735.9h7v7h-7zM884,735.9h7v7h-7zM912,735.9h7v7h-7zM926,735.9h7v7h-7zM888,804.5h7v7h-7zM847,834.8h7v7h-7zM896,834.8h7v7h-7z"/><path fill="#a39e9a" d="M863,735.9h7v7h-7zM914.9,765.1h7v7h-7zM861,827.8h7v7h-7zM903,827.8h7v7h-7z"/><path fill="#b3aea9" d="M898,735.9h7v7h-7zM844.9,765.1h7v7h-7zM907.9,765.1h7v7h-7zM923,797.5h7v7h-7zM819,827.8h7v7h-7zM924,827.8h7v7h-7zM931,827.8h7v7h-7zM833,857.9h7v7h-7zM924,857.9h7v7h-7z"/><path fill="#bfc5ca" d="M919,735.9h7v7h-7zM823.9,765.1h7v7h-7zM928.9,765.1h7v7h-7zM882,827.8h7v7h-7zM868,857.9h7v7h-7z"/><path fill="#ebebeb" d="M821,742.9h7v7h-7zM842,742.9h7v7h-7zM849,742.9h7v7h-7zM870,742.9h7v7h-7zM893.9,772.1h7v7h-7zM907.9,772.1h7v7h-7zM923,790.5h7v7h-7zM826,820.8h7v7h-7zM805,834.8h7v7h-7zM875,834.8h7v7h-7zM896,850.9h7v7h-7zM910,857.9h7v7h-7z"/><path fill="#e4e4e4" d="M863,742.9h7v7h-7zM898,742.9h7v7h-7zM933,742.9h7v7h-7zM837.9,772.1h7v7h-7zM839,804.5h7v7h-7zM846,804.5h7v7h-7zM853,804.5h7v7h-7zM833,820.8h7v7h-7zM826,850.9h7v7h-7zM812,864.9h7v7h-7zM882,864.9h7v7h-7zM910,864.9h7v7h-7z"/><path fill="#cccccc" d="M802.9,765.1h7v7h-7zM921.9,772.1h7v7h-7z"/><path fill="#9c9c9c" d="M872.9,765.1h7v7h-7zM825,797.5h7v7h-7zM867,797.5h7v7h-7zM812,827.8h7v7h-7zM868,827.8h7v7h-7zM917,827.8h7v7h-7zM917,857.9h7v7h-7z"/><path fill="#d3cdc7" d="M844.9,772.1h7v7h-7zM846,797.5h7v7h-7zM895,797.5h7v7h-7zM805,857.9h7v7h-7zM917,864.9h7v7h-7z"/><path fill="#c9cfd4" d="M879.9,772.1h7v7h-7zM910,827.8h7v7h-7zM812,857.9h7v7h-7z"/><path fill="#f5f5f5" d="M811,790.5h7v7h-7zM797,804.5h7v7h-7zM860,804.5h7v7h-7zM930,804.5h7v7h-7zM847,820.8h7v7h-7zM889,820.8h7v7h-7zM812,834.8h7v7h-7zM840,834.8h7v7h-7zM868,834.8h7v7h-7zM889,834.8h7v7h-7zM840,850.9h7v7h-7zM924,850.9h7v7h-7z"/></svg>
<div class="card" style="left:977px;top:632px;width:901px;height:264px"></div>
<div class="t" style="left:999px;top:654.5px;font-size:14px;line-height:18px;color:#1976d2;font-weight:bold;">Типы оплаты</div>
<svg class="i" style="left:1097px;top:653.3px;width:20px;height:20px;fill:#565656" viewBox="0 0 24 24"><path d="M11 7h2v2h-2zm0 4h2v6h-2zm1-9C6.48 2 2 6.48 2 12s4.48 10 10 10 10-4.48 10-10S17.52 2 12 2zm0 18c-4.41 0-8-3.59-8-8s3.59-8 8-8 8 3.59 8 8-3.59 8-8 8z"/></svg>
<svg class="c" width="1916" height="1200">
<path d="M1071.40,708.80A71.5,71.5 0 0 1 1088.02,849.84L1084.18,833.79A55,55 0 0 0 1071.40,725.30Z" fill="#64b5f6"/><path d="M1088.02,849.84A71.5,71.5 0 0 1 1004.71,806.09L1020.10,800.14A55,55 0 0 0 1084.18,833.79Z" fill="#ffc107"/><path d="M1004.71,806.09A71.5,71.5 0 0 1 1001.64,764.64L1017.74,768.25A55,55 0 0 0 1020.10,800.14Z" fill="#81c784"/><path d="M1001.64,764.64A71.5,71.5 0 0 1 1019.26,731.38L1031.29,742.67A55,55 0 0 0 1017.74,768.25Z" fill="#ef9a9a"/><path d="M1019.26,731.38A71.5,71.5 0 0 1 1042.84,714.75L1049.43,729.88A55,55 0 0 0 1031.29,742.67Z" fill="#e57373"/><path d="M1042.84,714.75A71.5,71.5 0 0 1 1071.40,708.80L1071.40,725.30A55,55 0 0 0 1049.43,729.88Z" fill="#b388ff"/>
<line x1="1028" y1="779.5" x2="1113" y2="779.5" stroke="#cfcfcf" stroke-width="1"/>
</svg>
<div class="t" style="left:921px;width:300px;text-align:center;top:735.9px;font-size:12px;line-height:16px;color:#666;">наличные</div>
<div class="t" style="left:921px;width:300px;text-align:center;top:751.7px;font-size:16px;line-height:21px;color:#212121;">275 440</div>
<div class="t" style="left:921px;width:300px;text-align:center;top:786.5px;font-size:16px;line-height:21px;color:#212121;">1 165 957</div>
<div class="t" style="left:921px;width:300px;text-align:center;top:806.5px;font-size:12px;line-height:16px;color:#666;">безналичные</div>
<div class="b" style="left:1159.8px;top:710.6px;width:8px;height:8px;background:#64b5f6;border-radius:50%"></div>
<div class="t" style="left:1173px;top:705.1px;font-size:14px;line-height:18px;color:#212121;">Внешняя продажа</div>
<div class="t" style="right:150.4px;top:705.1px;font-size:14px;line-height:18px;color:#212121;">37%</div>
<div class="t" style="right:58.8px;top:705.1px;font-size:14px;line-height:18px;color:#212121;">539 448</div>
<div class="b" style="left:1159.8px;top:735.9px;width:8px;height:8px;background:#ffc107;border-radius:50%"></div>
<div class="t" style="left:1173px;top:730.4px;font-size:14px;line-height:18px;color:#212121;">Платежная карта</div>
<div class="t" style="right:150.4px;top:730.4px;font-size:14px;line-height:18px;color:#212121;">18%</div>
<div class="t" style="right:58.8px;top:730.4px;font-size:14px;line-height:18px;color:#212121;">266 533</div>
<div class="b" style="left:1159.8px;top:761.6px;width:8px;height:8px;background:#81c784;border-radius:50%"></div>
<div class="t" style="left:1173px;top:756.1px;font-size:14px;line-height:18px;color:#212121;">Кредитная карта</div>
<div class="t" style="right:150.4px;top:756.1px;font-size:14px;line-height:18px;color:#212121;">8%</div>
<div class="t" style="right:58.8px;top:756.1px;font-size:14px;line-height:18px;color:#212121;">109 470</div>
<div class="b" style="left:1159.8px;top:786.6px;width:8px;height:8px;background:#ef9a9a;border-radius:50%"></div>
<div class="t" style="left:1173px;top:781.1px;font-size:14px;line-height:18px;color:#212121;">Пушкинская Карта</div>
<div class="t" style="right:150.4px;top:781.1px;font-size:14px;line-height:18px;color:#212121;">7%</div>
<div class="t" style="right:58.8px;top:781.1px;font-size:14px;line-height:18px;color:#212121;">98 848</div>
<div class="b" style="left:1159.8px;top:811.8px;width:8px;height:8px;background:#e57373;border-radius:50%"></div>
<div class="t" style="left:1173px;top:806.3px;font-size:14px;line-height:18px;color:#212121;">Платежный документ</div>
<div class="t" style="right:150.4px;top:806.3px;font-size:14px;line-height:18px;color:#212121;">5%</div>
<div class="t" style="right:58.8px;top:806.3px;font-size:14px;line-height:18px;color:#212121;">75 405</div>
<div class="b" style="left:1159.8px;top:837.6px;width:8px;height:8px;background:#b388ff;border-radius:50%"></div>
<div class="t" style="left:1173px;top:832.1px;font-size:14px;line-height:18px;color:#212121;">Остальные</div>
<div class="t" style="right:150.4px;top:832.1px;font-size:14px;line-height:18px;color:#212121;">5%</div>
<div class="t" style="right:58.8px;top:832.1px;font-size:14px;line-height:18px;color:#212121;">76 253</div>
<div class="card" style="left:67px;top:907px;width:536px;height:260px"></div>
<div class="t" style="left:93.5px;top:932.7px;font-size:14px;line-height:18px;color:#1976d2;font-weight:bold;">Топ релизов</div>
<svg class="i" style="left:184.2px;top:931.8px;width:20px;height:20px;fill:#565656" viewBox="0 0 24 24"><path d="M11 7h2v2h-2zm0 4h2v6h-2zm1-9C6.48 2 2 6.48 2 12s4.48 10 10 10 10-4.48 10-10S17.52 2 12 2zm0 18c-4.41 0-8-3.59-8-8s3.59-8 8-8 8 3.59 8 8-3.59 8-8 8z"/></svg>
<div class="t" style="right:1473px;top:932.7px;font-size:14px;line-height:18px;color:#666;">Доля зрителей</div>
<div class="t" style="right:1358.7px;top:932.7px;font-size:14px;line-height:18px;color:#666;">Зрители</div>
<div class="b" style="left:87px;top:957px;width:476px;height:1px;background:#dcdcdc"></div>
<div class="b" style="left:563.5px;top:927px;width:19.5px;height:133px;background:#f7f7f7"></div>
<svg class="c" width="1916" height="1200"><path d="M567.2,943 L573.2,936.5 L579.2,943Z" fill="#8a8a8a"/><rect x="567.3" y="951" width="11.6" height="140" rx="5.8" fill="#8b8b8b"/></svg>
<div class="t" style="left:92.5px;top:966.2px;font-size:14px;line-height:18px;color:#212121;">Горыныч</div>
<div class="t" style="right:1473px;top:964.2px;font-size:14px;line-height:18px;color:#212121;">22%</div>
<div class="t" style="right:1358.7px;top:966.2px;font-size:14px;line-height:18px;color:#212121;">892</div>
<div class="b" style="left:301px;top:983px;width:143px;height:3px;background:#bbdefb"></div>
<div class="b" style="left:301px;top:983px;width:31.46px;height:3px;background:#42a5f5"></div>
<div class="t" style="left:92.5px;top:999.4px;font-size:14px;line-height:18px;color:#212121;">Папины дочки. Мама верну…</div>
<div class="t" style="right:1473px;top:997.4px;font-size:14px;line-height:18px;color:#212121;">22%</div>
<div class="t" style="right:1358.7px;top:999.4px;font-size:14px;line-height:18px;color:#212121;">877</div>
<div class="b" style="left:301px;top:1016.2px;width:143px;height:3px;background:#bbdefb"></div>
<div class="b" style="left:301px;top:1016.2px;width:31.46px;height:3px;background:#42a5f5"></div>
<div class="t" style="left:92.5px;top:1033.1px;font-size:14px;line-height:18px;color:#212121;">Алиса в стране чудес</div>
<div class="t" style="right:1473px;top:1031.1px;font-size:14px;line-height:18px;color:#212121;">18%</div>
<div class="t" style="right:1358.7px;top:1033.1px;font-size:14px;line-height:18px;color:#212121;">719</div>
<div class="b" style="left:301px;top:1049.9px;width:143px;height:3px;background:#bbdefb"></div>
<div class="b" style="left:301px;top:1049.9px;width:25.74px;height:3px;background:#42a5f5"></div>
<div class="card" style="left:613px;top:907px;width:1265px;height:260px"></div>
<div class="b" style="left:1589px;top:927px;width:143px;height:133px;background:#f5f5f5"></div>
<div class="t" style="left:639.5px;top:932.8px;font-size:14px;line-height:18px;color:#1976d2;font-weight:bold;">Топ кинотеатров</div>
<svg class="i" style="left:761.4px;top:931.8px;width:20px;height:20px;fill:#565656" viewBox="0 0 24 24"><path d="M11 7h2v2h-2zm0 4h2v6h-2zm1-9C6.48 2 2 6.48 2 12s4.48 10 10 10 10-4.48 10-10S17.52 2 12 2zm0 18c-4.41 0-8-3.59-8-8s3.59-8 8-8 8 3.59 8 8-3.59 8-8 8z"/></svg>
<div class="b" style="left:633px;top:957px;width:1225px;height:1px;background:#dcdcdc"></div>
<div class="t" style="left:906.8px;top:932.8px;font-size:14px;line-height:18px;color:#666;">Город</div>
<svg class="i" style="left:950px;top:931.5px;width:20px;height:20px;fill:#666" viewBox="0 0 24 24"><path d="M6.6 9.8l5.4-5.6 5.400 5.6zM6.6 14.2l5.4 5.600 5.400-5.600z"/></svg>
<div class="t" style="right:763.4px;top:932.8px;font-size:14px;line-height:18px;color:#666;">Изм.доли</div>
<svg class="i" style="left:1158px;top:931.5px;width:20px;height:20px;fill:#666" viewBox="0 0 24 24"><path d="M6.6 9.8l5.4-5.6 5.400 5.6zM6.6 14.2l5.4 5.600 5.400-5.600z"/></svg>
<div class="t" style="right:654.5px;top:932.8px;font-size:14px;line-height:18px;color:#666;">Залы</div>
<svg class="i" style="left:1266.6px;top:931.5px;width:20px;height:20px;fill:#666" viewBox="0 0 24 24"><path d="M6.6 9.8l5.4-5.6 5.400 5.6zM6.6 14.2l5.4 5.600 5.400-5.600z"/></svg>
<div class="t" style="right:503.7px;top:932.8px;font-size:14px;line-height:18px;color:#666;">Выр./бил.</div>
<svg class="i" style="left:1418.3px;top:931.5px;width:20px;height:20px;fill:#666" viewBox="0 0 24 24"><path d="M6.6 9.8l5.4-5.6 5.400 5.6zM6.6 14.2l5.4 5.600 5.400-5.600z"/></svg>
<div class="t" style="right:352.4px;top:932.8px;font-size:14px;line-height:18px;color:#666;">Выр./бар</div>
<svg class="i" style="left:1569px;top:931.5px;width:20px;height:20px;fill:#666" viewBox="0 0 24 24"><path d="M6.6 9.8l5.4-5.6 5.400 5.6zM6.6 14.2l5.4 5.600 5.400-5.600z"/></svg>
<div class="t" style="right:210px;top:932.8px;font-size:14px;line-height:18px;color:#666;">Зрители</div>
<svg class="i" style="left:1711.2px;top:932.3px;width:19px;height:19px;fill:#555" viewBox="0 0 24 24"><path d="M20 12l-1.41-1.41L13 16.17V4h-2v12.17l-5.58-5.59L4 12l8 8 8-8z"/></svg>
<div class="t" style="right:84px;top:932.8px;font-size:14px;line-height:18px;color:#666;">Ср. цена</div>
<svg class="i" style="left:1836.8px;top:931.5px;width:20px;height:20px;fill:#666" viewBox="0 0 24 24"><path d="M6.6 9.8l5.4-5.6 5.400 5.6zM6.6 14.2l5.4 5.600 5.400-5.600z"/></svg>
<svg class="c" width="1916" height="1200" shape-rendering="crispEdges"><path fill="#ebebeb" d="M644,962.5h7v7h-7zM651,976.5h7v7h-7zM686,976.5h7v7h-7zM700,976.5h7v7h-7zM742,976.5h7v7h-7zM690,1003.5h7v7h-7zM718,1003.5h7v7h-7zM767,1003.5h7v7h-7zM648,1024h7v7h-7zM641,1038h7v7h-7zM662,1038h7v7h-7zM697,1038h7v7h-7zM932,962.5h7v7h-7zM960,976.5h7v7h-7zM953,1031h7v7h-7zM988,1031h7v7h-7zM925,1038h7v7h-7zM946,1038h7v7h-7zM967,1038h7v7h-7zM974,1038h7v7h-7z"/><path fill="#dfe1e6" d="M665,962.5h7v7h-7zM672,976.5h7v7h-7zM707,976.5h7v7h-7zM634,1024h7v7h-7zM704,1024h7v7h-7zM802,1024h7v7h-7zM725,1038h7v7h-7zM753,1038h7v7h-7zM774,1038h7v7h-7zM918,962.5h7v7h-7zM932,976.5h7v7h-7zM939,976.5h7v7h-7zM953,976.5h7v7h-7zM918,1038h7v7h-7zM939,1038h7v7h-7z"/><path fill="#f3efeb" d="M700,962.5h7v7h-7zM644,976.5h7v7h-7zM693,976.5h7v7h-7zM756,976.5h7v7h-7zM770,976.5h7v7h-7zM777,976.5h7v7h-7zM746,1003.5h7v7h-7zM662,1024h7v7h-7zM718,1024h7v7h-7zM774,1031h7v7h-7zM634,1038h7v7h-7zM648,1038h7v7h-7zM655,1038h7v7h-7zM711,1038h7v7h-7zM904,962.5h7v7h-7z"/><path fill="#f5f5f5" d="M714,962.5h7v7h-7zM658,976.5h7v7h-7zM665,976.5h7v7h-7zM714,976.5h7v7h-7zM739,996.5h7v7h-7zM760,1003.5h7v7h-7zM746,1024h7v7h-7zM683,1031h7v7h-7zM732,1031h7v7h-7zM676,1038h7v7h-7zM746,1038h7v7h-7zM802,1038h7v7h-7zM946,969.5h7v7h-7zM911,976.5h7v7h-7zM974,1024h7v7h-7zM988,1024h7v7h-7zM953,1038h7v7h-7z"/><path fill="#e9edf1" d="M721,962.5h7v7h-7zM728,962.5h7v7h-7zM735,976.5h7v7h-7zM749,976.5h7v7h-7zM641,1003.5h7v7h-7zM648,1003.5h7v7h-7zM683,1003.5h7v7h-7zM704,1003.5h7v7h-7zM725,1003.5h7v7h-7zM683,1024h7v7h-7zM753,1024h7v7h-7zM683,1038h7v7h-7zM739,1038h7v7h-7zM781,1038h7v7h-7zM788,1038h7v7h-7zM946,996.5h7v7h-7zM953,1003.5h7v7h-7z"/><path fill="#d6d6d6" d="M637,969.5h7v7h-7zM763,976.5h7v7h-7zM784,976.5h7v7h-7zM753,996.5h7v7h-7zM939,969.5h7v7h-7zM981,1038h7v7h-7z"/><path fill="#b3aea9" d="M644,969.5h7v7h-7zM658,969.5h7v7h-7zM707,969.5h7v7h-7zM749,969.5h7v7h-7zM634,1031h7v7h-7zM662,1031h7v7h-7zM690,1031h7v7h-7zM788,1031h7v7h-7z"/><path fill="#a39e9a" d="M651,969.5h7v7h-7zM700,969.5h7v7h-7zM777,969.5h7v7h-7zM784,969.5h7v7h-7zM704,996.5h7v7h-7zM725,996.5h7v7h-7zM725,1031h7v7h-7zM904,969.5h7v7h-7zM960,969.5h7v7h-7zM911,996.5h7v7h-7zM925,996.5h7v7h-7zM995,1031h7v7h-7z"/><path fill="#9fa8a2" d="M665,969.5h7v7h-7zM686,969.5h7v7h-7zM760,996.5h7v7h-7zM641,1031h7v7h-7zM669,1031h7v7h-7zM704,1031h7v7h-7zM981,1031h7v7h-7z"/><path fill="#c4c4c4" d="M672,969.5h7v7h-7zM721,969.5h7v7h-7zM753,1031h7v7h-7zM946,976.5h7v7h-7zM960,1038h7v7h-7z"/><path fill="#a3adb6" d="M679,969.5h7v7h-7zM763,969.5h7v7h-7zM641,996.5h7v7h-7zM697,996.5h7v7h-7zM676,1031h7v7h-7zM802,1031h7v7h-7zM953,969.5h7v7h-7zM918,996.5h7v7h-7zM904,1031h7v7h-7zM925,1031h7v7h-7zM939,1031h7v7h-7z"/><path fill="#f1f1f1" d="M693,969.5h7v7h-7zM756,969.5h7v7h-7zM679,976.5h7v7h-7zM676,1003.5h7v7h-7zM732,1003.5h7v7h-7zM753,1003.5h7v7h-7zM690,1024h7v7h-7zM711,1024h7v7h-7zM739,1024h7v7h-7zM704,1038h7v7h-7zM795,1038h7v7h-7zM911,1038h7v7h-7zM1002,1038h7v7h-7z"/><path fill="#9c9c9c" d="M714,969.5h7v7h-7zM728,969.5h7v7h-7zM711,996.5h7v7h-7zM767,996.5h7v7h-7zM932,969.5h7v7h-7zM932,996.5h7v7h-7zM960,996.5h7v7h-7zM1002,1031h7v7h-7z"/><path fill="#b9b9b9" d="M735,969.5h7v7h-7zM770,969.5h7v7h-7zM746,996.5h7v7h-7zM746,1031h7v7h-7zM781,1031h7v7h-7zM925,969.5h7v7h-7zM953,996.5h7v7h-7z"/><path fill="#a6a6a6" d="M742,969.5h7v7h-7zM655,996.5h7v7h-7zM676,996.5h7v7h-7zM683,996.5h7v7h-7zM711,1031h7v7h-7zM911,969.5h7v7h-7zM911,1031h7v7h-7z"/><path fill="#9aa3b0" d="M634,996.5h7v7h-7zM662,996.5h7v7h-7zM648,1031h7v7h-7zM697,1031h7v7h-7zM939,996.5h7v7h-7zM967,1031h7v7h-7zM974,1031h7v7h-7z"/><path fill="#a89e95" d="M648,996.5h7v7h-7zM655,1031h7v7h-7zM739,1031h7v7h-7zM760,1031h7v7h-7zM904,996.5h7v7h-7zM946,1031h7v7h-7zM960,1031h7v7h-7z"/><path fill="#c9cfd4" d="M669,996.5h7v7h-7zM795,1031h7v7h-7zM690,1038h7v7h-7zM918,1031h7v7h-7zM932,1031h7v7h-7zM904,1038h7v7h-7z"/><path fill="#e4e4e4" d="M690,996.5h7v7h-7zM634,1003.5h7v7h-7zM697,1024h7v7h-7zM669,1038h7v7h-7zM918,976.5h7v7h-7zM925,976.5h7v7h-7zM988,1038h7v7h-7z"/><path fill="#bfc5ca" d="M718,996.5h7v7h-7zM662,1003.5h7v7h-7zM669,1003.5h7v7h-7zM718,1031h7v7h-7zM767,1038h7v7h-7zM918,969.5h7v7h-7z"/><path fill="#d3cdc7" d="M732,996.5h7v7h-7zM767,1031h7v7h-7zM904,976.5h7v7h-7zM995,1038h7v7h-7z"/></svg>
<div class="t" style="right:743.9px;top:963.9px;font-size:14px;line-height:18px;color:#2e7d32;">+2.8 п.п.</div>
<div class="t" style="right:634px;top:963.9px;font-size:14px;line-height:18px;color:#212121;">10</div>
<div class="t" style="right:483.3px;top:963.9px;font-size:14px;line-height:18px;color:#212121;">509 056</div>
<div class="t" style="right:332.3px;top:963.9px;font-size:14px;line-height:18px;color:#212121;">184 355</div>
<div class="t" style="right:189.5px;top:963.9px;font-size:14px;line-height:18px;color:#212121;">1 310</div>
<div class="t" style="right:64px;top:963.9px;font-size:14px;line-height:18px;color:#212121;">389</div>
<div class="t" style="right:743.9px;top:994.5px;font-size:14px;line-height:18px;color:#2e7d32;">+11.6 п.п.</div>
<div class="t" style="right:634px;top:994.5px;font-size:14px;line-height:18px;color:#212121;">7</div>
<div class="t" style="right:483.3px;top:994.5px;font-size:14px;line-height:18px;color:#212121;">329 360</div>
<div class="t" style="right:332.3px;top:994.5px;font-size:14px;line-height:18px;color:#212121;">147 360</div>
<div class="t" style="right:189.5px;top:994.5px;font-size:14px;line-height:18px;color:#212121;">780</div>
<div class="t" style="right:64px;top:994.5px;font-size:14px;line-height:18px;color:#212121;">422</div>
<div class="t" style="right:743.9px;top:1025.3px;font-size:14px;line-height:18px;color:#c62828;">-0.8 п.п.</div>
<div class="t" style="right:634px;top:1025.3px;font-size:14px;line-height:18px;color:#212121;">6</div>
<div class="t" style="right:483.3px;top:1025.3px;font-size:14px;line-height:18px;color:#212121;">204 277</div>
<div class="t" style="right:332.3px;top:1025.3px;font-size:14px;line-height:18px;color:#212121;">84 400</div>
<div class="t" style="right:189.5px;top:1025.3px;font-size:14px;line-height:18px;color:#212121;">672</div>
<div class="t" style="right:64px;top:1025.3px;font-size:14px;line-height:18px;color:#212121;">304</div>
<div class="b" style="left:1898px;top:99px;width:18px;height:961px;background:#fcfcfc"></div>
<svg class="c" width="1916" height="1200"><path d="M1902,114.2 L1908,107.6 L1914,114.2Z" fill="#8a8a8a"/><path d="M1902,1042.6 L1908,1049.2 L1914,1042.6Z" fill="#8a8a8a"/><rect x="1902" y="140" width="12" height="629" rx="6" fill="#8b8b8b"/></svg>
</div></div>
<div id="bar"></div>
<div class="b" style="left:67px;top:58px;width:30px;height:30px;background:#f5f5f5;border:1px solid #dedede;border-radius:3px 0 0 3px"></div>
<div class="b" style="left:480px;top:58px;width:30px;height:30px;background:#f5f5f5;border:1px solid #dedede;border-radius:0 3px 3px 0"></div>
<div class="b" style="left:96px;top:58px;width:385px;height:30px;background:#fafafa;border:1px solid #ababab;border-radius:0"></div>
<div class="t" style="left:108.6px;top:64.2px;font-size:14px;line-height:18px;color:#212121;">5 выбрано</div>
<div class="b" style="left:521px;top:58px;width:213px;height:30px;background:#fafafa;border:1px solid #ababab;border-radius:3px"></div>
<div class="b" style="left:550px;top:59px;width:1px;height:28px;background:#adadad"></div>
<div class="b" style="left:704px;top:59px;width:1px;height:28px;background:#adadad"></div>
<svg class="i" style="left:560px;top:63px;width:20px;height:20px;fill:#444" viewBox="0 0 24 24"><path d="M19 3h-1V1h-2v2H8V1H6v2H5c-1.11 0-1.99.9-1.99 2L3 19c0 1.1.89 2 2 2h14c1.1 0 2-.9 2-2V5c0-1.1-.9-2-2-2zm0 16H5V8h14v11zM7 10h5v5H7z"/></svg>
<div class="t" style="left:585.6px;top:64.2px;font-size:14px;line-height:18px;color:#212121;">31 октября 2025</div>
<div class="b" style="left:744px;top:58px;width:253px;height:30px;background:#fafafa;border:1px solid #ababab;border-radius:3px"></div>
<svg class="i" style="left:803px;top:63px;width:20px;height:20px;fill:#444" viewBox="0 0 24 24"><path d="M15 21h2v-2h-2v2zm4-12h2V7h-2v2zM3 5v14c0 1.1.9 2 2 2h4v-2H5V5h4V3H5c-1.1 0-2 .9-2 2zm16-2v2h2c0-1.1-.9-2-2-2zm-8 20h2V1h-2v22zm8-6h2v-2h-2v2zM15 5h2V3h-2v2zm4 8h2v-2h-2v2zm0 8c1.1 0 2-.9 2-2h-2v2z"/></svg>
<div class="t" style="left:828.8px;top:64.2px;font-size:14px;line-height:18px;color:#212121;">24 октября 2025</div>
<div class="b" style="left:1787px;top:58px;width:31px;height:30px;background:#fafafa;border:1px solid #b5b5b5;border-radius:3px"></div>
<svg class="i" style="left:1792.5px;top:63.3px;width:20px;height:20px;fill:#555" viewBox="0 0 24 24"><path d="M20 2H4c-1.1 0-1.99.9-1.99 2L2 22l4-4h14c1.1 0 2-.9 2-2V4c0-1.1-.9-2-2-2zm-7 12h-2v-2h2v2zm0-4h-2V6h2v4z"/></svg>
<svg class="i" style="left:1838px;top:63px;width:20px;height:20px;fill:#555" viewBox="0 0 24 24"><path d="M11.99 2C6.47 2 2 6.48 2 12s4.47 10 9.99 10C17.52 22 22 17.52 22 12S17.52 2 11.99 2zM12 20c-4.42 0-8-3.58-8-8s3.58-8 8-8 8 3.58 8 8-3.58 8-8 8zm.5-13H11v6l5.25 3.15.75-1.23-4.5-2.67z"/></svg>
<div class="t" style="left:1864px;top:64.2px;font-size:14px;line-height:18px;color:#555;">11:33</div>
<svg class="c" width="1916" height="110">
<path d="M85.2,68.3 L80,73 L85.2,77.7" fill="none" stroke="#8c8c8c" stroke-width="1.5"/>
<path d="M492,68.3 L497.2,73 L492,77.7" fill="none" stroke="#8c8c8c" stroke-width="1.5"/>
<path d="M460.8,70.75 L465.8,76.25 L470.8,70.75" fill="none" stroke="#333" stroke-width="1.7"/>
<path d="M539.1,68.2 L533.5,73 L539.1,77.8" fill="none" stroke="#3a3a3a" stroke-width="1.45"/>
<path d="M715.9,68.2 L721.5,73 L715.9,77.8" fill="none" stroke="#3a3a3a" stroke-width="1.45"/>
</svg>
<div id="top"></div>
<div class="t" style="left:67px;top:11.8px;font-size:16px;line-height:21px;color:#1a1a1a;font-weight:bold;">Кинопульс</div>
<svg class="c" width="1916" height="48"><path d="M159.95,20.5 L164.7,25.5 L169.45,20.5" fill="none" stroke="#444" stroke-width="1.5"/></svg>
<div class="b" style="left:185px;top:13px;width:1px;height:18px;background:#c9cdd3"></div>
<div class="t" style="left:196px;top:11.8px;font-size:16px;line-height:21px;color:#1a1a1a;font-weight:bold;">Дашборд</div>
<svg class="i" style="left:1570px;top:4px;width:40px;height:36px" viewBox="1570 4 40 36"><g fill="#6085ad" stroke="#6085ad" stroke-width=".5" stroke-linejoin="round"><path d="M1589.5,9.9 L1598.1,24.2 L1589.1,24.8 L1584.8,17.5Z"/><path d="M1583.5,18.4 L1587.4,25 Q1588.5,26.3 1589.9,27.4 Q1590.5,28.3 1589.6,28.9 L1588,29.9 Q1587.2,30.3 1586.5,29.5 L1584.3,27.1 Q1581.6,28.3 1579.6,26.5 Q1577.5,24.3 1578.4,21.9 Q1579.1,20.3 1581,19.5Z"/><path d="M1594.3,14.1 Q1596.2,14.5 1596.8,15.7 Q1597.3,16.6 1596.9,17.5 Q1596.4,17.9 1595.9,17.4 Q1595.5,16 1594.4,14.9Z"/></g></svg>
<svg class="i" style="left:1618.3px;top:10px;width:24px;height:24px;fill:#4178ab" viewBox="0 0 24 24"><path d="M19 3H4.99c-1.11 0-1.98.89-1.98 2L3 19c0 1.1.88 2 1.99 2H19c1.1 0 2-.9 2-2V5c0-1.11-.9-2-2-2zm0 12h-4c0 1.66-1.35 3-3 3s-3-1.34-3-3H4.99V5H19v10z"/></svg>
<svg class="i" style="left:1659.3px;top:10px;width:24px;height:24px;fill:#4178ab" viewBox="0 0 24 24"><path d="M13 3c-4.97 0-9 4.03-9 9H1l3.89 3.89.07.14L9 12H6c0-3.87 3.13-7 7-7s7 3.13 7 7-3.13 7-7 7c-1.93 0-3.68-.79-4.94-2.06l-1.42 1.42C8.27 19.99 10.51 21 13 21c4.97 0 9-4.03 9-9s-4.03-9-9-9zm-1 5v5l4.28 2.54.72-1.21-3.5-2.08V8H12z"/></svg>
<svg class="i" style="left:1699px;top:10px;width:24px;height:24px;fill:#4178ab" viewBox="0 0 24 24"><path d="M12 22c1.1 0 2-.9 2-2h-4c0 1.1.89 2 2 2zm6-6v-5c0-3.07-1.64-5.64-4.5-6.32V4c0-.83-.67-1.5-1.5-1.5s-1.5.67-1.5 1.5v.68C7.63 5.36 6 7.92 6 11v5l-2 2v1h16v-1l-2-2z"/></svg>
<svg class="i" style="left:1740px;top:10px;width:24px;height:24px;fill:#4178ab" viewBox="0 0 24 24"><path d="M17 10H7v2h10v-2zm2-7h-1V1h-2v2H8V1H6v2H5c-1.11 0-1.99.9-1.99 2L3 19c0 1.1.89 2 2 2h14c1.1 0 2-.9 2-2V5c0-1.1-.9-2-2-2zm0 16H5V8h14v11zm-5-5H7v2h7v-2z"/></svg>
<svg class="i" style="left:1780.2px;top:10px;width:24px;height:24px;fill:#4178ab" viewBox="0 0 24 24"><path d="M20 2H4c-1.1 0-1.99.9-1.99 2L2 22l4-4h14c1.1 0 2-.9 2-2V4c0-1.1-.9-2-2-2zM6 9h12v2H6V9zm8 5H6v-2h8v2zm4-6H6V6h12v2z"/></svg>
<div class="t" style="left:1822.6px;top:11.8px;font-size:16px;line-height:21px;color:#1a1a1a;font-weight:bold;">RU</div>
<svg class="i" style="left:1856px;top:0;width:48px;height:44px" viewBox="1856 0 48 44"><defs><clipPath id="av"><circle cx="1880.45" cy="21.35" r="17.3"/></clipPath><linearGradient id="avg" x1="0" y1="0" x2="0" y2="1"><stop offset="0" stop-color="#3a3a3a"/><stop offset=".35" stop-color="#222"/><stop offset="1" stop-color="#070707"/></linearGradient></defs><circle cx="1880.45" cy="21.35" r="17.45" fill="#3f78ad"/><circle cx="1880.45" cy="21.35" r="17.1" fill="url(#avg)"/><g clip-path="url(#av)" fill="#6c8aab"><path d="M1880.1,9.8 C1876.5,9.8 1874,11.5 1874,14.2 L1874,18.8 L1873.2,20 L1874.4,22.1 C1875,24 1876,24.6 1876,25.6 L1876,29.4 C1876,31 1875,31.9 1873.6,31.9 L1869.5,32.3 L1867.8,33.1 L1860,41 L1901,41 L1892.8,33.3 L1891.9,32.3 L1888.7,32.3 C1886,32 1883.6,30.5 1883.4,28.6 L1883.4,26.6 C1884,25 1885,24 1885.4,22.9 L1886.4,20 L1886.2,18.8 L1886.2,14.2 C1886.2,11.5 1883.700,9.8 1880.1,9.8Z"/></g></svg>
<div id="side"></div>
<div class="b" style="left:0px;top:0px;width:47px;height:48px;background:#1f2d3b"></div>
<svg class="i" style="left:8px;top:9px;width:26px;height:26px" viewBox="8 9 26 26"><defs><clipPath id="lg"><circle cx="20.95" cy="22.05" r="12.2"/></clipPath></defs><g clip-path="url(#lg)"><rect x="8" y="9" width="26" height="26" fill="#4a5b90"/><path d="M13 24 L14.3 18.700 L17.200 15.600 L18.300 17.200 L19.400 16.300 L21.400 18.700 L23.400 16 L25.800 19.200 L28.300 12.900 L34 19 L34 28 L13 28Z" fill="#1e90ff"/><path d="M8 19.500 L12.700 14.900 L15.400 22.900 L17.400 18.900 L20.500 25 L23.200 20 L26.500 25 L29 18.300 L31.200 17.400 L34 15 L34 36 L8 36Z" fill="#3de8d2"/></g></svg>
<div class="b" style="left:0px;top:48px;width:47px;height:37px;background:#6384ac"></div>
<svg class="i" style="left:7.9px;top:54.7px;width:24.6px;height:24.6px;fill:#fff" viewBox="0 0 24 24"><path d="M22 6.92l-1.41-1.41-2.85 3.21C15.68 6.4 12.83 5 9.61 5 6.72 5 4.07 6.16 2 8l1.42 1.42C5.12 7.93 7.27 7 9.61 7c2.74 0 5.09 1.26 6.77 3.24l-2.88 3.24-4-4L2 16.99l1.5 1.5 6-6.01 4 4 4.05-4.55c.75 1.35 1.25 2.9 1.44 4.55H21c-.22-2.3-.95-4.39-2.04-6.14L22 6.92z"/></svg>
<div class="b" style="left:0px;top:85px;width:47px;height:37px;background:#ff9800"></div>
<svg class="i" style="left:8.4px;top:92px;width:24px;height:24px;fill:#fff" viewBox="0 0 24 24"><path d="M12 22c1.1 0 2-.9 2-2h-4c0 1.1.89 2 2 2zm6-6v-5c0-3.07-1.64-5.64-4.5-6.32V4c0-.83-.67-1.5-1.5-1.5s-1.5.67-1.5 1.5v.68C7.63 5.36 6 7.92 6 11v5l-2 2v1h16v-1l-2-2z"/></svg>
<svg class="i" style="left:8px;top:129px;width:24px;height:24px;fill:#6384ac" viewBox="0 0 24 24"><path d="M12 12c2.21 0 4-1.79 4-4s-1.79-4-4-4-4 1.79-4 4 1.79 4 4 4zm0 2c-2.67 0-8 1.34-8 4v2h16v-2c0-2.66-5.33-4-8-4z"/></svg>
<div class="b" style="left:0px;top:159px;width:47px;height:1px;background:#40566c"></div>
<svg class="i" style="left:8.2px;top:167px;width:24px;height:24px;fill:#6384ac" viewBox="0 0 24 24"><path d="M19.14 12.94c.04-.3.06-.61.06-.94 0-.32-.02-.64-.07-.94l2.03-1.58c.18-.14.23-.41.12-.61l-1.92-3.32c-.12-.22-.37-.29-.59-.22l-2.39.96c-.5-.38-1.03-.7-1.62-.94l-.36-2.54c-.04-.24-.24-.41-.48-.41h-3.84c-.24 0-.43.17-.47.41l-.36 2.54c-.59.24-1.13.57-1.62.94l-2.39-.96c-.22-.08-.47 0-.59.22L2.74 8.87c-.12.21-.08.47.12.61l2.03 1.58c-.05.3-.09.63-.09.94s.02.64.07.94l-2.03 1.58c-.18.14-.23.41-.12.61l1.92 3.32c.12.22.37.29.59.22l2.39-.96c.5.38 1.03.7 1.62.94l.36 2.54c.05.24.24.41.48.41h3.84c.24 0 .44-.17.47-.41l.36-2.54c.59-.24 1.13-.56 1.62-.94l2.39.96c.22.08.47 0 .59-.22l1.92-3.32c.12-.22.07-.47-.12-.61l-2.01-1.58zM12 15.6c-1.98 0-3.6-1.62-3.6-3.6s1.62-3.6 3.6-3.6 3.6 1.62 3.6 3.6-1.62 3.6-3.6 3.6z"/></svg>
<div class="b" style="left:0px;top:197px;width:47px;height:1px;background:#40566c"></div>
<div class="b" style="left:0px;top:960px;width:47px;height:39px;background:#f57c00"></div>
<div class="b" style="left:0px;top:999px;width:47px;height:40.5px;background:#0d7ff2"></div>
<div class="b" style="left:0px;top:1039.5px;width:47px;height:37.5px;background:#03892a"></div>
<svg class="i" style="left:8.2px;top:966.7px;width:24.4px;height:24.4px;fill:#fff" viewBox="0 0 24 24"><path d="M21 5c-1.11-.35-2.33-.5-3.5-.5-1.95 0-4.05.4-5.5 1.5-1.45-1.1-3.55-1.5-5.5-1.5S2.45 4.9 1 6v14.65c0 .25.25.5.5.5.1 0 .15-.05.25-.05C3.1 20.45 5.05 20 6.5 20c1.95 0 4.05.4 5.5 1.5 1.35-.85 3.8-1.5 5.5-1.5 1.65 0 3.35.3 4.75 1.05.1.05.15.05.25.05.25 0 .5-.25.5-.5V6c-.6-.45-1.25-.75-2-1zm0 13.5c-1.1-.35-2.3-.5-3.5-.5-1.7 0-4.15.65-5.5 1.5V8c1.35-.85 3.8-1.5 5.5-1.5 1.2 0 2.4.15 3.5.5v11.5z"/></svg>
<svg class="i" style="left:11px;top:1009px;width:20.4px;height:20.4px" viewBox="0 0 24 24"><path fill="#fff" d="M20 2H4c-1.100 0-2 .9-2 2v18l4-4h14c1.100 0 2-.9 2-2V4c0-1.100-.9-2-2-2zM8.500 6.500c.83 0 1.500.67 1.500 1.500s-.67 1.500-1.500 1.500S7 8.830 7 8s.67-1.500 1.500-1.500zm7 0c.83 0 1.500.67 1.500 1.500s-.67 1.500-1.500 1.500S14 8.830 14 8s.67-1.500 1.500-1.500zM12 15.500c-2.300 0-4.300-1.400-5.100-3.500h10.200c-.8 2.100-2.800 3.500-5.100 3.500z"/></svg>
<svg class="i" style="left:8.3px;top:1046.5px;width:24px;height:24px;fill:#fff" viewBox="0 0 24 24"><path d="M19 2H5c-1.11 0-2 .9-2 2v14c0 1.1.89 2 2 2h4l3 3 3-3h4c1.1 0 2-.9 2-2V4c0-1.1-.9-2-2-2zm-6 16h-2v-2h2v2zm2.07-7.75l-.9.92C13.45 11.9 13 12.5 13 14h-2v-.5c0-1.1.45-2.1 1.17-2.83l1.24-1.26c.37-.36.59-.86.59-1.41 0-1.1-.9-2-2-2s-2 .9-2 2H8c0-2.21 1.79-4 4-4s4 1.79 4 4c0 .88-.36 1.68-.93 2.25z"/></svg>
<svg class="c" width="120" height="160" style="z-index:9"><line x1="45" y1="94.5" x2="71.4" y2="136.700" stroke="#ed1c24" stroke-width="3.8" stroke-linecap="round"/><path d="M32.400,75.400 L52.700,88.600 L36.400,99Z" fill="#ed1c24"/></svg>
</body></html>
